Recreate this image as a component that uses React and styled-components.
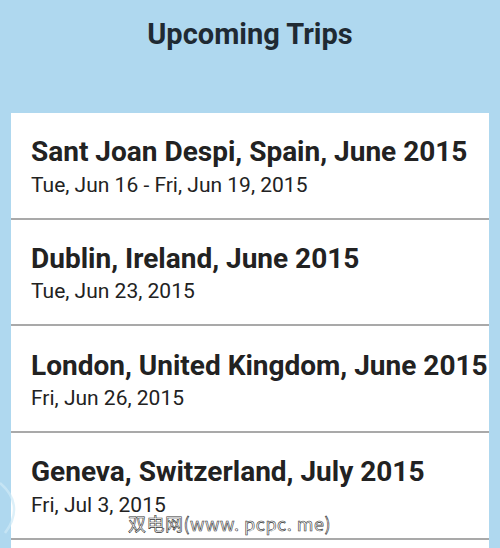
import styled, { createGlobalStyle } from "styled-components";

const GlobalStyle = createGlobalStyle`
    html, body {
        margin: 0;
        padding: 0;
        background: #afd8ef;
    }

    body {
        font-family: Roboto, "Liberation Sans", sans-serif;
    }
`;

const trips = [
    { id: 1, title: "Sant Joan Despi, Spain, June 2015", dates: "Tue, Jun 16 - Fri, Jun 19, 2015" },
    { id: 2, title: "Dublin, Ireland, June 2015", dates: "Tue, Jun 23, 2015" },
    { id: 3, title: "London, United Kingdom, June 2015", dates: "Fri, Jun 26, 2015" },
    { id: 4, title: "Geneva, Switzerland, July 2015", dates: "Fri, Jul 3, 2015" },
    { id: 5, title: "", dates: "" },
];

function App() {
    return (
        <Screen>
            <GlobalStyle />
            <Wave viewBox="0 0 60 120" aria-hidden="true">
                <path d="M0 20 C 30 45, 40 80, 10 120" fill="none" stroke="#cfe9f7" strokeWidth="5" opacity="0.7" />
            </Wave>
            <Header>Upcoming Trips</Header>
            <Card>
                {trips.map((trip) => (
                    <Row key={trip.id}>
                        <Title>{trip.title}</Title>
                        <Dates>{trip.dates}</Dates>
                    </Row>
                ))}
            </Card>
            <Watermark>双电网(www. pcpc. me)</Watermark>
        </Screen>
    );
}

const Screen = styled.div`
    position: relative;
    width: 500px;
    height: 548px;
    overflow: hidden;
    background: #afd8ef;
    display: flex;
    flex-direction: column;
`;

const Wave = styled.svg`
    position: absolute;
    left: 0;
    bottom: 0;
    width: 30px;
    height: 90px;
`;

const Header = styled.h1`
    flex-shrink: 0;
    margin: 0;
    height: 113px;
    padding-top: 16.5px;
    box-sizing: border-box;
    text-align: center;
    font-size: 29px;
    line-height: 34px;
    font-weight: 700;
    color: #1f2a33;
`;

const Card = styled.div`
    margin: 0 11px;
    background: #fff;
    flex: 1;
    overflow: hidden;
`;

const Row = styled.div`
    box-sizing: border-box;
    height: 106.67px;
    padding: 23.4px 20px 0;
    border-bottom: 2px solid #a9a9a9;
`;

const Title = styled.div`
    font-size: 28px;
    font-weight: 700;
    line-height: 32px;
    color: #222;
    white-space: nowrap;
`;

const Dates = styled.div`
    margin-top: 3.4px;
    font-size: 21px;
    line-height: 26px;
    color: #222;
    white-space: nowrap;
`;

const Watermark = styled.div`
    position: absolute;
    left: 128px;
    top: 510px;
    font-family: "Noto Sans CJK SC", sans-serif;
    font-size: 18px;
    color: #fff;
    -webkit-text-stroke: 0.6px #333;
    letter-spacing: 0.5px;
`;

export default App;
